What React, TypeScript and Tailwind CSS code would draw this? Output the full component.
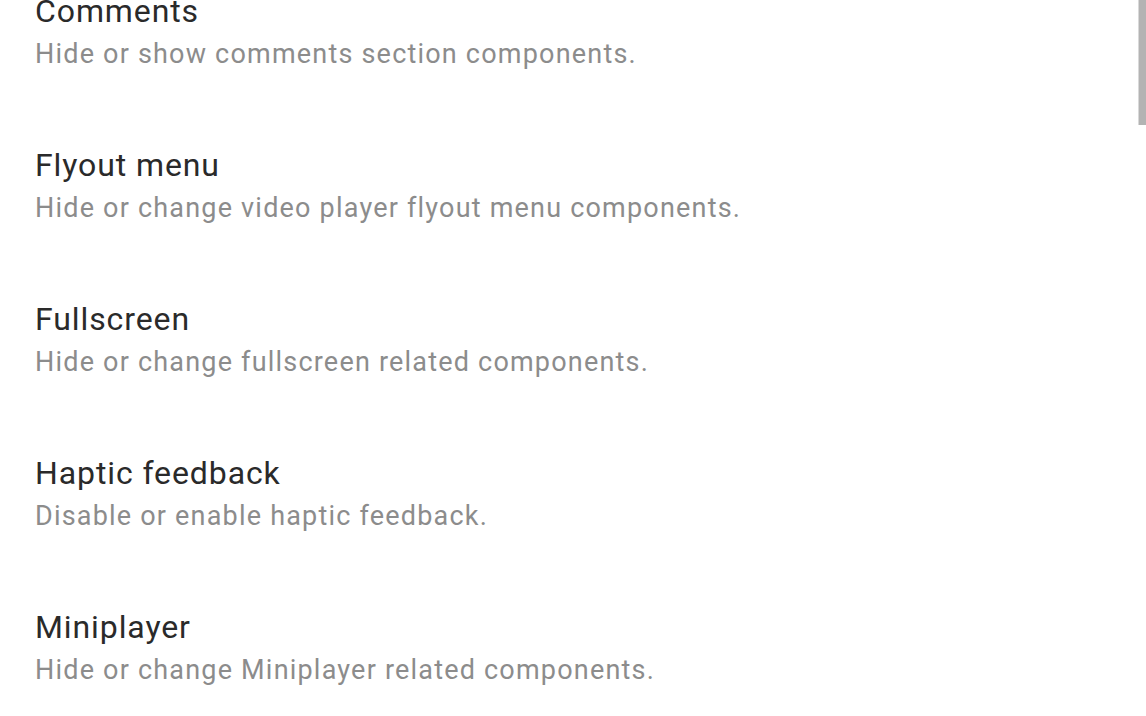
const settings = [
  { title: "Comments", summary: "Hide or show comments section components." },
  { title: "Flyout menu", summary: "Hide or change video player flyout menu components." },
  { title: "Fullscreen", summary: "Hide or change fullscreen related components." },
  { title: "Haptic feedback", summary: "Disable or enable haptic feedback." },
  { title: "Miniplayer", summary: "Hide or change Miniplayer related components." },
];

export default function App() {
  return (
    <main className="relative h-[716px] w-[1146px] overflow-hidden bg-white font-['Roboto',sans-serif]">
      <ul className="mt-[-7px]">
        {settings.map((item) => (
          <li key={item.title} className="h-[154px] pl-[35px]">
            <p className="text-[32px] leading-[36px] tracking-[0.9px] text-[#2a2a2a]">{item.title}</p>
            <p className="mt-[9px] text-[27px] leading-[32px] tracking-[1.2px] text-[#8c8c8c]">
              {item.summary}
            </p>
          </li>
        ))}
      </ul>
      {/* scroll indicator */}
      <div className="absolute right-0 top-0 h-[125px] w-[8px] border-l border-[#d9d9d9] bg-[#b3b3b3]" />
    </main>
  );
}
